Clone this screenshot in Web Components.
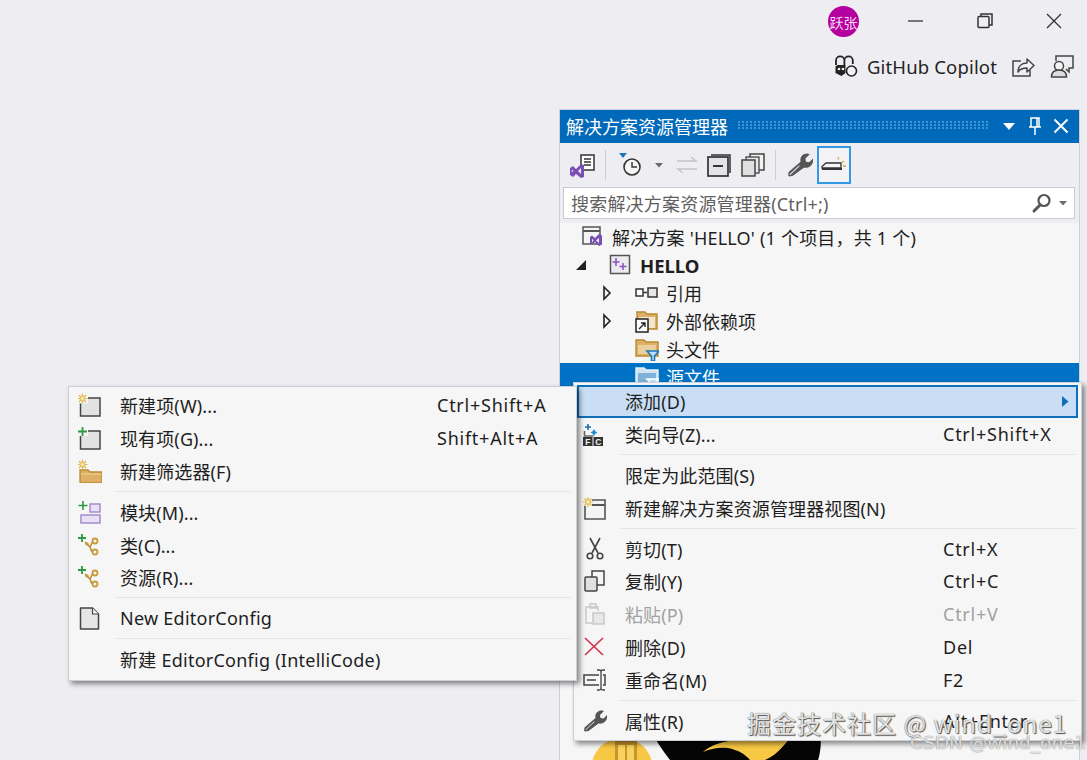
<!DOCTYPE html>
<html lang="zh">
<head>
<meta charset="utf-8">
<title>解决方案资源管理器</title>
<style>
  html, body { height: 100%; }
  body {
    margin: 0;
    overflow: hidden;
    position: relative;
    background: #eeeef2;
    color: #1e1e1e;
    font: 18px "Noto Sans", "Noto Sans CJK SC", sans-serif;
  }
</style>
</head>
<body>
<vs-window-bar></vs-window-bar>
<vs-explorer></vs-explorer>

<vs-menu style="left:573px;top:382px;width:509px;padding-bottom:2px;--keys:135px">
  <vs-item label="添加(D)" arrow hot></vs-item>
  <vs-item icon="wizard" label="类向导(Z)..." keys="Ctrl+Shift+X"></vs-item>
  <vs-sep></vs-sep>
  <vs-item label="限定为此范围(S)"></vs-item>
  <vs-item icon="newview" label="新建解决方案资源管理器视图(N)"></vs-item>
  <vs-sep></vs-sep>
  <vs-item icon="cut" label="剪切(T)" keys="Ctrl+X"></vs-item>
  <vs-item icon="copy" label="复制(Y)" keys="Ctrl+C"></vs-item>
  <vs-item icon="paste" label="粘贴(P)" keys="Ctrl+V" off></vs-item>
  <vs-item icon="delete" label="删除(D)" keys="Del"></vs-item>
  <vs-item icon="rename" label="重命名(M)" keys="F2"></vs-item>
  <vs-sep></vs-sep>
  <vs-item icon="wrench" label="属性(R)" keys="Alt+Enter"></vs-item>
</vs-menu>

<vs-menu style="left:68px;top:386px;width:509px">
  <vs-item icon="newitem" label="新建项(W)..." keys="Ctrl+Shift+A"></vs-item>
  <vs-item icon="existing" label="现有项(G)..." keys="Shift+Alt+A"></vs-item>
  <vs-item icon="newfilter" label="新建筛选器(F)"></vs-item>
  <vs-sep></vs-sep>
  <vs-item icon="module" label="模块(M)..."></vs-item>
  <vs-item icon="classadd" label="类(C)..."></vs-item>
  <vs-item icon="classadd" label="资源(R)..."></vs-item>
  <vs-sep></vs-sep>
  <vs-item icon="doc" label="New EditorConfig" wide></vs-item>
  <vs-sep></vs-sep>
  <vs-item label="新建 EditorConfig (IntelliCode)" wide></vs-item>
</vs-menu>

<vs-watermark></vs-watermark>

<script>
// the little yellow star that marks "new" on several icons
const SPARK = (x, y) => `<path d="M${x} ${y - 5}v10M${x - 5} ${y}h10M${x - 3.500} ${y - 3.500}l7 7M${x + 3.500} ${y - 3.500}l-7 7" stroke="#dfb650" stroke-width="1.200"/><circle cx="${x}" cy="${y}" r="3" fill="#e8c668"/><circle cx="${x}" cy="${y}" r="1.300" fill="#fbf3d6"/>`;

// every icon lives here, drawn on a 24 x 24 box
const ICONS = {
  wizard: `<path d="M5 2v6M2 5h6" stroke="#1b6fb5" stroke-width="1.600"/><path d="M11 7l1.300 2.200 2.200 1.300-2.200 1.300L11 14l-1.300-2.200-2.200-1.300 2.200-1.300z" fill="#1b8ad0"/><path d="M1.500 9v5h9" stroke="#666" fill="none" stroke-width="1.600"/><rect x="0" y="15" width="9.500" height="9" fill="#333"/><rect x="10.500" y="15" width="9.500" height="9" fill="#333"/><text x="4.750" y="22.800" text-anchor="middle" font-family="Liberation Sans, sans-serif" font-size="8.500" font-weight="700" fill="#f2f2f2">F</text><text x="15.250" y="22.800" text-anchor="middle" font-family="Liberation Sans, sans-serif" font-size="8.500" font-weight="700" fill="#f2f2f2">C</text>`,
  newview: `<path d="M9 4h13v19H2V10" fill="#f4f4f4" stroke="#555" stroke-width="1.600"/><path d="M9 9h13" stroke="#555" stroke-width="2"/>${SPARK(5, 6)}`,
  cut: `<path d="M7 1l8 15M17 1L9 16" stroke="#444" stroke-width="1.600" fill="none"/><circle cx="7" cy="19" r="2.800" fill="none" stroke="#444" stroke-width="1.600"/><circle cx="17" cy="19" r="2.800" fill="none" stroke="#444" stroke-width="1.600"/>`,
  copy: `<rect x="9" y="2" width="12" height="14" fill="#f5f5f5" stroke="#444" stroke-width="1.500"/><rect x="2" y="8" width="12" height="14" rx="1" fill="#e0e0e0" stroke="#444" stroke-width="1.500"/>`,
  paste: `<path d="M5 5h10v4M9 21H3V5h3" fill="none" stroke="#c8c8c8" stroke-width="1.500"/><rect x="7" y="2" width="6" height="4" fill="none" stroke="#c8c8c8" stroke-width="1.500"/><rect x="10" y="11" width="11" height="11" fill="#e8e8e8" stroke="#c8c8c8" stroke-width="1.500"/>`,
  delete: `<path d="M2 3l18 17M20 3L2 20" stroke="#d6334f" stroke-width="1.700"/>`,
  rename: `<path d="M16 7H1v10h15M20 7h2v10h-2" fill="none" stroke="#444" stroke-width="1.500"/><path d="M14 2h2c1 0 2 .5 2 1.500v17c0 1-1 1.500-2 1.500h-2M22 2h-2c-1 0-2 .5-2 1.500v17c0 1 1 1.500 2 1.500h2" fill="none" stroke="#444" stroke-width="1.300"/><path d="M4 12h9" stroke="#444" stroke-width="1.500"/>`,
  wrench: `<path d="M2 22.500l-1-1 .5-3L12.500 9c-1-4.500 2.500-8 7-7.500l1.500.5-4 4 .5 3 3 .5 3.500-3.500c1 5.500-3.500 9.500-8.500 8.500L5.500 22z" fill="#555"/><path d="M2.500 21l9-8.500" stroke="#dcdcdc"/>`,
  newitem: `<rect x="2.500" y="5" width="19.500" height="18" fill="#e2e2e2" stroke="#444" stroke-width="1.500"/><rect x="0" y="0" width="10" height="10.500" fill="#f6f6f6"/>${SPARK(4.5, 5.5)}`,
  existing: `<rect x="2.500" y="5" width="19.500" height="18" fill="#e2e2e2" stroke="#444" stroke-width="1.500"/><rect x="0" y="0" width="10" height="10" fill="#f6f6f6"/><path d="M4.500 1v9M0 5.500h9" stroke="#2c9a41" stroke-width="1.800"/>`,
  newfilter: `<path d="M2 11h8l2 2h12v11H2z" fill="#dcb067" stroke="#b98b2e" stroke-width="1.300"/><path d="M3 15h20" stroke="#efd39f"/>${SPARK(4.5, 5.5)}`,
  module: `<rect x="12" y="4" width="10" height="8" fill="#e8e0f4" stroke="#a58ccd" stroke-width="1.500"/><rect x="3" y="15" width="19" height="8" fill="#e8e0f4" stroke="#a58ccd" stroke-width="1.500"/><path d="M5 1v9M.5 5.500h9" stroke="#2c9a41" stroke-width="1.600"/>`,
  classadd: `<path d="M4 1v8M0 5h8" stroke="#2c9a41" stroke-width="1.800"/><path d="M7 9l5 5M12 14l3-6M12 14l2 5" stroke="#b98b2e" stroke-width="1.600" fill="none"/><circle cx="17" cy="8" r="2.500" fill="none" stroke="#c89b3c" stroke-width="1.800"/><circle cx="17" cy="19" r="2.500" fill="none" stroke="#c89b3c" stroke-width="1.800"/><circle cx="9" cy="11" r="1.700" fill="#c89b3c"/>`,
  doc: `<path d="M2.500 2h12l6 6v15h-18z" fill="#e6e6e6" stroke="#444" stroke-width="1.500" stroke-linejoin="round"/><path d="M14.500 2v6h6" fill="#f7f7f7" stroke="#444" stroke-width="1.200"/>`,
};

const svgIcon = (name, size = 24) =>
  `<svg width="${size}" height="${size}" viewBox="0 0 24 24" aria-hidden="true">${ICONS[name] ?? ""}</svg>`;

class VsWindowBar extends HTMLElement {
  constructor() {
    super();
    this.attachShadow({ mode: "open" });
    this.shadowRoot.innerHTML = `
      <style>
        :host { display: block; height: 109px; box-sizing: border-box; position: relative; }
        .caps { display: flex; justify-content: flex-end; align-items: center; height: 42px; padding-right: 24px; }
        .avatar {
          width: 31px; height: 31px; border-radius: 50%; background: #b4009e; color: #f7d8f2;
          font: 14px "Noto Sans CJK SC", sans-serif; display: flex; align-items: center; justify-content: center;
          margin-right: 48px; margin-top: 1px;
        }
        .cap { width: 18px; height: 18px; display: block; }
        .restore { margin-left: 51px; }
        .close { margin-left: 51px; }
        .tools { display: flex; justify-content: flex-end; align-items: center; height: 34px; margin-top: 7px; padding-right: 13px; }
        .name { font-size: 18.500px; color: #242424; margin: 0 14px 0 9px; letter-spacing: .15px; }
        svg { display: block; }
      </style>
      <div class="caps">
        <div class="avatar">跃张</div>
        <svg class="cap" viewBox="0 0 18 18"><path d="M1 9h15" stroke="#333" stroke-width="1.300"/></svg>
        <svg class="cap restore" viewBox="0 0 18 18"><path d="M5 4V2h11v11h-3" fill="none" stroke="#333" stroke-width="1.500"/><rect x="2" y="4.500" width="11" height="11" rx="1" fill="none" stroke="#333" stroke-width="1.500"/></svg>
        <svg class="cap close" viewBox="0 0 18 18"><path d="M2 2l14 14M16 2L2 16" stroke="#333" stroke-width="1.300"/></svg>
      </div>
      <div class="tools">
        <svg width="24" height="24" viewBox="0 0 24 24"><path d="M2 11V6.500a4.200 4.200 0 0 1 8.400 0V11M10.400 6.500a4.200 4.200 0 0 1 8.400 0V10" fill="#eeeef2" stroke="#222" stroke-width="1.800"/><path d="M1.500 12.500l2-1.500h8v8l-4 3-6-3z" fill="#222"/><circle cx="17.500" cy="17" r="5" fill="#f4f4f4" stroke="#222" stroke-width="1.600"/><circle cx="5" cy="15" r="1.300" fill="#eee"/><circle cx="9" cy="15" r="1.300" fill="#eee"/></svg>
        <span class="name">GitHub Copilot</span>
        <svg width="24" height="24" viewBox="0 0 24 24" style="margin-right:15px"><path d="M10 7H2v15h17v-6" fill="none" stroke="#444" stroke-width="1.500"/><path d="M7 18c0-6 4-9 9-9V5l7 6.500-7 6.500v-4c-4 0-7 1-9 4z" fill="#f4f4f4" stroke="#444" stroke-width="1.500" stroke-linejoin="round"/></svg>
        <svg width="24" height="24" viewBox="0 0 24 24"><path d="M6 7V2h17v12h-4v4l-3-3" fill="none" stroke="#444" stroke-width="1.500"/><circle cx="9" cy="12" r="4.500" fill="#f4f4f4" stroke="#444" stroke-width="1.500"/><path d="M1.500 23c0-5 3-7 7.500-7s7.500 2 7.500 7z" fill="#ddd" stroke="#444" stroke-width="1.500"/></svg>
      </div>`;
  }
}

class VsExplorer extends HTMLElement {
  constructor() {
    super();
    this.attachShadow({ mode: "open" });
    this.shadowRoot.innerHTML = `
      <style>
        :host {
          display: block; box-sizing: border-box; width: 521px; height: 651px; margin-left: 559px;
          border: 1px solid #ccd0dc; border-bottom: 0; position: relative; overflow: hidden;
          background: #f6f6f6;
        }
        .title {
          height: 33px; box-sizing: border-box; background: #0069b9; color: #fff; display: flex; align-items: center;
          padding: 0 10px 2px 6px; font-size: 18px;
        }
        .dots {
          flex: 1; height: 9px; margin: 0 12px 0 10px;
          background: radial-gradient(circle at 1px 1px, #3f95d6 .8px, transparent 1px) 0 0 / 4px 3px;
        }
        .title svg { display: block; }
        .bar { height: 44px; background: #eeeef2; display: flex; align-items: center; padding-left: 8px; box-sizing: border-box; }
        .vline { width: 1px; height: 30px; background: #ccced6; }
        .bar svg { display: block; }
        .on { border: 2px solid #3399e6; width: 34px; height: 38px; box-sizing: border-box; display: flex; align-items: center; justify-content: center; background: #f3f3f6; margin-left: 4px; }
        .searchwrap { background: #eeeef2; padding: 0 4px 4px 3px; height: 36px; box-sizing: border-box; }
        .search {
          height: 32px; box-sizing: border-box; background: #fff; border: 1px solid #c8cad4;
          display: flex; align-items: center; padding: 0 6px 0 7px; color: #5f5f5f; font-size: 18px;
        }
        .search span { flex: 1; letter-spacing: .2px; }
        .tree { display: flex; flex-direction: column; }
        .art { position: absolute; left: 0; bottom: 0; display: block; }
      </style>
      <div class="title">
        <span>解决方案资源管理器</span><div class="dots"></div>
        <svg width="14" height="14" viewBox="0 0 14 14" style="margin-right:12px"><path d="M1 4h12l-6 7z" fill="#fff"/></svg>
        <svg width="14" height="18" viewBox="0 0 14 18" style="margin-right:11px"><path d="M3 1h8v9H3zM1 10h12M7 10v8M9 1v9" fill="none" stroke="#fff" stroke-width="1.500"/></svg>
        <svg width="16" height="16" viewBox="0 0 16 16"><path d="M1.500 1.500l13 13M14.500 1.500l-13 13" stroke="#fff" stroke-width="2"/></svg>
      </div>
      <div class="bar">
        <svg width="28" height="26" viewBox="0 0 28 26"><rect x="13" y="3" width="13" height="15" fill="#fff" stroke="#333" stroke-width="1.500"/><path d="M16 7h7M16 10h7M16 13h7" stroke="#333" stroke-width="1.300"/><path d="M13 12l-5 5-3-3-3 2v7l3 2 3-3 5 4 3-1V13z" fill="#7a4fb4"/><path d="M13 16l-3 3 3 3zM3.800 17.500v3l1.600-1.500z" fill="#f0eaf8"/></svg>
        <div class="vline" style="margin:0 12px 0 9px"></div>
        <svg width="30" height="28" viewBox="0 0 30 28"><path d="M1 2h8l-4 5z" fill="#1b75bc"/><circle cx="14" cy="16" r="8" fill="#f5f5f5" stroke="#333" stroke-width="1.600"/><path d="M14 11v5h5" fill="none" stroke="#333" stroke-width="1.400"/></svg>
        <svg width="11" height="8" viewBox="0 0 11 8" style="margin:0 9px 0 6px"><path d="M1 2h8L5 6.500z" fill="#6a6a6a"/></svg>
        <svg width="26" height="22" viewBox="0 0 26 22"><path d="M3 7h19l-5-4M23 15H4l5 4" fill="none" stroke="#c2c2c8" stroke-width="1.500"/></svg>
        <svg width="26" height="26" viewBox="0 0 26 26" style="margin-left:6px"><path d="M5 3h19v18" fill="none" stroke="#333" stroke-width="1.500"/><rect x="2" y="5" width="20" height="19" fill="#e4e4e6" stroke="#333" stroke-width="1.700"/><path d="M7 14h10" stroke="#333" stroke-width="2"/></svg>
        <svg width="26" height="26" viewBox="0 0 26 26" style="margin-left:8px"><rect x="10" y="2" width="14" height="16" fill="#f2f2f2" stroke="#444" stroke-width="1.500"/><rect x="6" y="5" width="13" height="16" fill="#e8e8e8" stroke="#444" stroke-width="1.300"/><rect x="2" y="8" width="13" height="16" fill="#e0e0e0" stroke="#444" stroke-width="1.500"/></svg>
        <div class="vline" style="margin:0 11px 0 9px"></div>
        <svg width="26" height="26" viewBox="0 0 24 24">${ICONS.wrench}</svg>
        <div class="on"><svg width="28" height="22" viewBox="0 0 28 22"><path d="M6 9h15v5H2v-1.500z" fill="#f6f6f6" stroke="#333" stroke-width="1.300"/><path d="M2 15h20" stroke="#333" stroke-width="2"/><path d="M18 3l.7 2.500M24 7l-2 1.500M26 12h-3" stroke="#d9a93a" stroke-width="1.300"/></svg></div>
      </div>
      <div class="searchwrap">
        <div class="search">
          <span>搜索解决方案资源管理器(Ctrl+;)</span>
          <svg width="22" height="22" viewBox="0 0 22 22"><circle cx="13" cy="8.500" r="5.500" fill="none" stroke="#555" stroke-width="2.200"/><path d="M9 13l-6 6" stroke="#555" stroke-width="3" stroke-linecap="round"/></svg>
          <svg width="10" height="8" viewBox="0 0 10 8" style="margin-left:5px"><path d="M1 2h8L5 6.500z" fill="#6a6a6a"/></svg>
        </div>
      </div>
      <div class="tree">
        <vs-tree-row icon-at="22" kind="solution" gap="6" style="letter-spacing:.2px">解决方案 'HELLO' (1 个项目，共 1 个)</vs-tree-row>
        <vs-tree-row arrow-at="15" icon-at="49" arrow="open" kind="project" gap="7" bold>HELLO</vs-tree-row>
        <vs-tree-row arrow-at="42" icon-at="75" arrow="closed" kind="refs" gap="7">引用</vs-tree-row>
        <vs-tree-row arrow-at="42" icon-at="75" arrow="closed" kind="deps" gap="7">外部依赖项</vs-tree-row>
        <vs-tree-row icon-at="75" kind="headers" gap="7">头文件</vs-tree-row>
        <vs-tree-row icon-at="75" kind="sources" gap="7" selected>源文件</vs-tree-row>
      </div>
      <svg class="art" width="519" height="30" viewBox="0 0 519 30">
        <ellipse cx="62" cy="36" rx="30" ry="28" fill="#f7c843"/>
        <path d="M55 11h22v19H55z" fill="#c9962c"/><path d="M58 15h7v15h-7zM67 15h7v15h-7z" fill="#f7d25e"/>
        <path d="M90 0H260C262 12 260 24 258 30H110C102 20 96 10 90 0z" fill="#050505"/>
        <path d="M143 22C155 12 170 8 230 8C222 18 215 26 205 30H190C185 24 178 20 168 18C158 17 150 19 143 22z" fill="#f7c843"/>
      </svg>`;
  }
}

const TREE_ICONS = {
  solution: `<rect x="1" y="2" width="17" height="17" fill="#f4f4f4" stroke="#555" stroke-width="1.500"/><path d="M1 6h17" stroke="#555" stroke-width="2"/><path d="M17 9l-4 4-3-2.500-2 1.500v6l2 1.500 3-2.500 4 4 3-1.500V10.500z" fill="#7a4fb4"/><path d="M17 13l-3 2.500 3 2.500zM10 13.800v3.400l1.500-1.700z" fill="#f3edf9"/>`,
  project: `<rect x="1.500" y="2.500" width="19" height="18" fill="#ecebf0" stroke="#555" stroke-width="1.500"/><path d="M7 5v8M3.500 9h7M14 10v7M10.500 13.500h7" stroke="#8a4fc0" stroke-width="1.500"/>`,
  refs: `<rect x="1" y="8" width="7" height="7" fill="#fff" stroke="#333" stroke-width="1.500"/><path d="M8 11.500h4" stroke="#333" stroke-width="1.500"/><rect x="13" y="7" width="9" height="9" fill="#e6e6e6" stroke="#333" stroke-width="1.500"/>`,
  deps: `<path d="M2 3h8l2 2h10v15H2z" fill="#dcb067" stroke="#b98b2e" stroke-width="1.400"/><path d="M4 8h16v11H4z" fill="#f3e6cc"/><rect x="1" y="10" width="12" height="13" fill="#fdfdfd" stroke="#222" stroke-width="1.500"/><path d="M4 20l6-6M6 14h4v4" fill="none" stroke="#222" stroke-width="1.400"/>`,
  headers: `<path d="M1 3h8l2 2h12v14H1z" fill="#dcb067" stroke="#b98b2e" stroke-width="1.400"/><path d="M3 8h18v9H3z" fill="#e9cf9d"/><path d="M12 14h12l-4.500 5v5h-3v-5z" fill="#bfe0f6" stroke="#1b75bc" stroke-width="1.600"/>`,
  sources: `<path d="M1 3h8l2 2h12v14H1z" fill="#cfe3f3" stroke="#e7f1f9" stroke-width="1.400"/><path d="M3 8h18v9H3z" fill="#7fb1d9"/><path d="M12 14h12l-4.500 5v5h-3v-5z" fill="#bfe0f6" stroke="#fff" stroke-width="1.600"/>`,
};

class VsTreeRow extends HTMLElement {
  constructor() {
    super();
    this.attachShadow({ mode: "open" });
    const iconAt = Number(this.getAttribute("icon-at") ?? 0);
    const arrowAt = Number(this.getAttribute("arrow-at") ?? 0);
    const gap = this.getAttribute("gap") ?? 8;
    const arrow = this.getAttribute("arrow");
    const open = `<svg width="12" height="14" viewBox="0 0 12 14"><path d="M11 2v10H1z" fill="#222"/></svg>`;
    const closed = `<svg width="10" height="16" viewBox="0 0 10 16"><path d="M2 2l6 6-6 6z" fill="#f6f6f6" stroke="#222" stroke-width="1.600"/></svg>`;
    const mark = arrow === "open" ? open : arrow === "closed" ? closed : "";
    this.shadowRoot.innerHTML = `
      <style>
        :host { display: block; flex: none; height: 28px; }
        :host([selected]) .row { background: #0072c6; color: #fff; }
        :host([bold]) slot { font-weight: 700; font-size: 18.500px; }
        .row { height: 28px; display: flex; align-items: center; font-size: 18px; color: #1e1e1e; }
        .tw { width: ${iconAt}px; box-sizing: border-box; padding-left: ${arrowAt}px; flex: none; display: flex; align-items: center; }
        .tw svg { display: block; }
        .ico { margin-right: ${gap}px; display: block; flex: none; }
      </style>
      <div class="row"><div class="tw">${mark}</div><svg class="ico" width="24" height="24" viewBox="0 0 24 24">${TREE_ICONS[this.getAttribute("kind")] ?? ""}</svg><slot></slot></div>`;
  }
}

class VsMenu extends HTMLElement {
  constructor() {
    super();
    this.attachShadow({ mode: "open" });
    this.shadowRoot.innerHTML = `
      <style>
        :host {
          display: block; position: absolute; box-sizing: border-box;
          background: #f6f6f6; border: 1px solid #ccced8; padding: 2px 3px 4px 3px;
          box-shadow: 3px 3px 5px rgba(0,0,0,.45);
        }
      </style>
      <slot></slot>`;
  }
}

class VsSep extends HTMLElement {
  constructor() {
    super();
    this.attachShadow({ mode: "open" });
    this.shadowRoot.innerHTML = `
      <style>
        :host { display: block; height: 8px; position: relative; }
        div { position: absolute; left: 43px; right: 2px; top: 3px; height: 1px; background: #e4e4e6; }
      </style>
      <div></div>`;
  }
}

class VsItem extends HTMLElement {
  constructor() {
    super();
    this.attachShadow({ mode: "open" });
    const icon = this.getAttribute("icon");
    const keys = this.getAttribute("keys") ?? "";
    const label = this.getAttribute("label") ?? "";
    this.shadowRoot.innerHTML = `
      <style>
        :host { display: block; height: 32.900px; }
        .item { height: 32.900px; box-sizing: border-box; padding-bottom: 1px; display: grid; grid-template-columns: 48px 1fr var(--keys, 136px); align-items: center; color: #1e1e1e; font-size: 18px; position: relative; }
        :host([hot]) .item { background: #c9def5; outline: 2px solid #0f6fb9; outline-offset: -2px; }
        :host([off]) .item { color: #a2a2a2; }
        .ico { padding-left: 6px; display: flex; align-items: center; }
        .ico svg { display: block; }
        .label, .keys { white-space: nowrap; }
        .label { letter-spacing: .12px; }
        :host([wide]) .label { letter-spacing: .25px; }
        .keys { letter-spacing: .75px; }
        .arr { position: absolute; right: 9px; top: 11px; }
      </style>
      <div class="item">
        <div class="ico">${icon ? svgIcon(icon) : ""}</div>
        <div class="label">${label}</div>
        <div class="keys">${keys}</div>
        ${this.hasAttribute("arrow") ? `<svg class="arr" width="8" height="11" viewBox="0 0 8 11"><path d="M1 0l6.500 5.500L1 11z" fill="#0f6fb9"/></svg>` : ""}
      </div>`;
  }
}

class VsWatermark extends HTMLElement {
  constructor() {
    super();
    this.attachShadow({ mode: "open" });
    this.shadowRoot.innerHTML = `
      <style>
        :host { display: block; position: absolute; left: 747px; top: 705px; width: 340px; height: 55px; pointer-events: none; }
        div { position: absolute; white-space: nowrap; color: rgba(255,255,255,.85); text-shadow: 0 0 1px #444, 1px 1px 1px #555; }
        .a { left: 0; top: 0; font: 24px "Noto Sans CJK SC", sans-serif; letter-spacing: 1px; }
        .b { left: 163px; top: 27px; font: 18.500px "DejaVu Sans", sans-serif; color: rgba(255,255,255,.8); text-shadow: 0 0 1px #555; }
      </style>
      <div class="a">掘金技术社区 @ wind_one1</div>
      <div class="b">CSDN @wind_one1</div>`;
  }
}

customElements.define("vs-window-bar", VsWindowBar);
customElements.define("vs-tree-row", VsTreeRow);
customElements.define("vs-explorer", VsExplorer);
customElements.define("vs-menu", VsMenu);
customElements.define("vs-sep", VsSep);
customElements.define("vs-item", VsItem);
customElements.define("vs-watermark", VsWatermark);
</script>
</body>
</html>
